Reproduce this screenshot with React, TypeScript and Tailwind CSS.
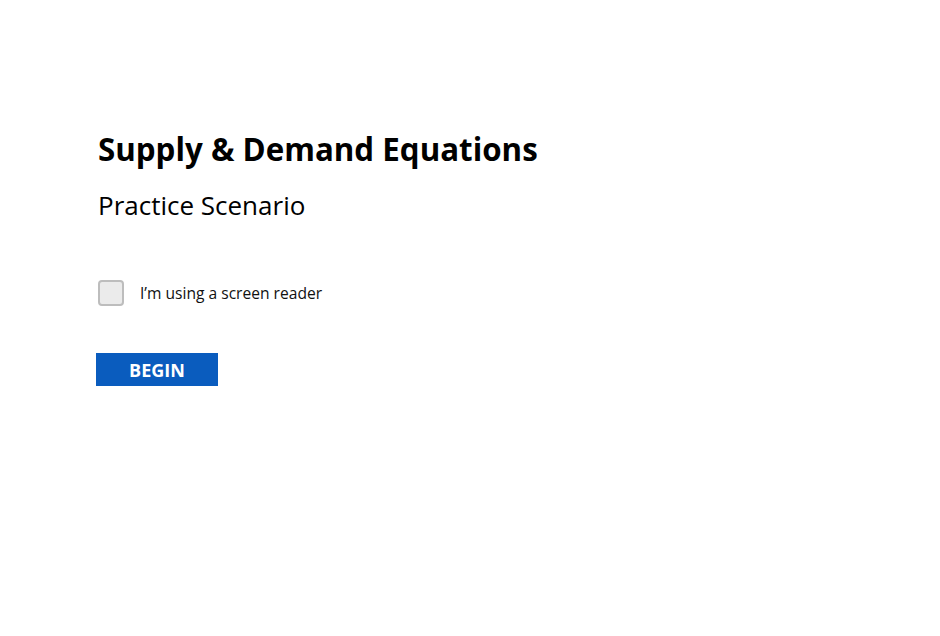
export default function App() {
  return (
    <div
      className="min-h-[636px] w-full bg-white text-black"
      style={{ fontFamily: '"Open Sans", "Noto Sans", sans-serif' }}
    >
      <div className="flex flex-col items-start pl-[98px] pt-[127px]">
        <h1 className="text-[31.3px] font-bold leading-[44px]">Supply &amp; Demand Equations</h1>
        <h2 className="mt-[15px] text-[26px] font-normal leading-[38px]">Practice Scenario</h2>

        <label className="mt-[56px] flex items-center gap-[16px]">
          <span className="h-[26px] w-[26px] rounded-[4px] border-2 border-[#bdbdbd] bg-[#ebebeb]" />
          <span className="text-[15.6px] leading-[20px] text-[#111]">I’m using a screen reader</span>
        </label>

        <button className="-ml-[2px] mt-[47px] h-[33px] w-[122px] bg-[#0a5cbe] text-[18px] font-bold leading-[24px] text-white">
          BEGIN
        </button>
      </div>
    </div>
  );
}
